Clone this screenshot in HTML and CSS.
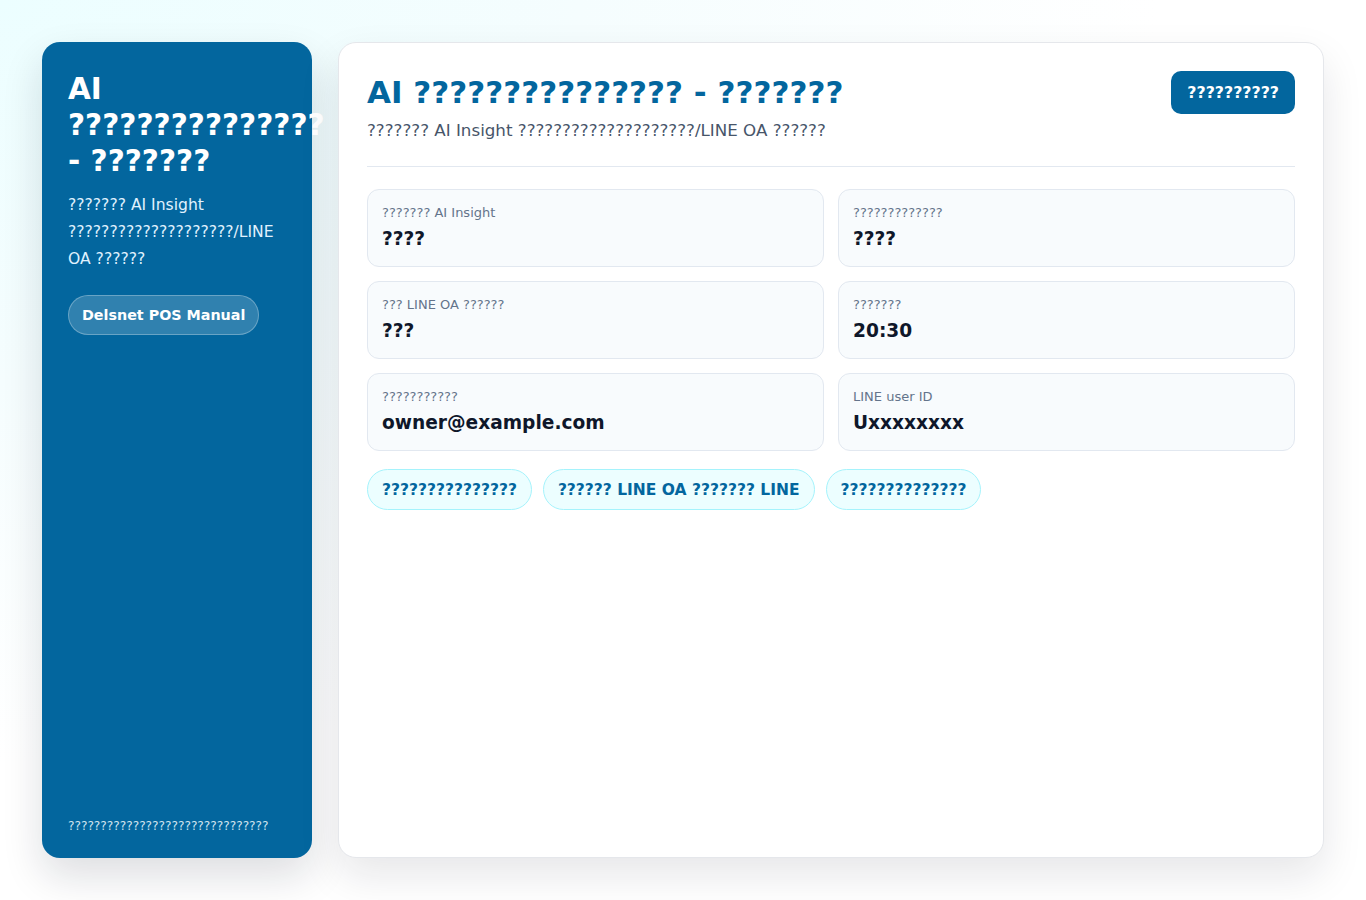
FILE: index.html
```html
<!DOCTYPE html>
<html lang="th">
<head>
<meta charset="utf-8">
<title>AI Insight</title>
<link rel="stylesheet" href="styles.css">
</head>
<body>
<div class="layout">
  <aside class="sidebar">
    <h1 class="side-title">AI ??????????????? - ???????</h1>
    <p class="side-text">??????? AI Insight ????????????????????/LINE OA ??????</p>
    <a class="side-btn" href="#">Delsnet POS Manual</a>
    <div class="side-foot">???????????????????????????????</div>
  </aside>
  <main class="main">
    <header class="head">
      <div class="head-text">
        <h2 class="title">AI ??????????????? - ???????</h2>
        <p class="subtitle">??????? AI Insight ????????????????????/LINE OA ??????</p>
      </div>
      <button class="primary">??????????</button>
    </header>
    <section class="grid">
      <div class="card"><div class="label">??????? AI Insight</div><div class="value">????</div></div>
      <div class="card"><div class="label">?????????????</div><div class="value">????</div></div>
      <div class="card"><div class="label">??? LINE OA ??????</div><div class="value">???</div></div>
      <div class="card"><div class="label">???????</div><div class="value">20:30</div></div>
      <div class="card"><div class="label">???????????</div><div class="value">owner@example.com</div></div>
      <div class="card"><div class="label">LINE user ID</div><div class="value">Uxxxxxxxx</div></div>
    </section>
    <div class="pills">
      <button class="pill">???????????????</button>
      <button class="pill">?????? LINE OA ??????? LINE</button>
      <button class="pill">??????????????</button>
    </div>
  </main>
</div>
</body>
</html>
```
FILE: styles.css
```css
* { box-sizing: border-box; }
html, body { margin: 0; height: 100%; }
body {
  font-family: "DejaVu Sans", Verdana, sans-serif;
  background: radial-gradient(ellipse at 0% 0%, #ecfeff 0%, #f5fdfe 30%, #ffffff 60%);
  color: #0f172a;
}
.layout {
  display: grid;
  grid-template-columns: 270px 1fr;
  gap: 26px;
  padding: 42px 42px 42px 42px;
  height: 900px;
}
.sidebar {
  background: #03669e;
  border-radius: 18px;
  padding: 29px 26px 24px;
  color: #fff;
  display: flex;
  flex-direction: column;
  align-items: flex-start;
  box-shadow: 0 18px 40px rgba(15, 23, 42, 0.14);
}
.side-title {
  margin: 0;
  font-size: 29.5px;
  line-height: 36px;
  font-weight: 700;
}
.side-text {
  margin: 13px 0 0;
  font-size: 15.6px;
  line-height: 27px;
  color: #e0f2fe;
  word-break: break-word;
}
.side-btn {
  margin-top: 22px;
  display: inline-block;
  padding: 9.5px 13px;
  border-radius: 999px;
  background: rgba(255, 255, 255, 0.18);
  border: 1px solid rgba(255, 255, 255, 0.28);
  color: #fff;
  font-weight: 700;
  font-size: 14.3px;
  line-height: 19px;
  text-decoration: none;
}
.side-foot {
  margin-top: auto;
  font-size: 12.2px;
  line-height: 16px;
  color: #cfe3ef;
}
.main {
  background: #fff;
  border: 1px solid #e5e7eb;
  border-radius: 18px;
  padding: 28px 28px;
  box-shadow: 0 18px 40px rgba(15, 23, 42, 0.10);
}
.head {
  display: flex;
  justify-content: space-between;
  align-items: flex-start;
  padding-bottom: 25px;
  border-bottom: 1px solid #e2e8f0;
}
.title {
  margin: 0;
  font-size: 31px;
  line-height: 42px;
  color: #03669e;
  font-weight: 700;
}
.subtitle {
  margin: 6px 0 0;
  font-size: 16.7px;
  line-height: 22px;
  color: #475569;
}
.primary {
  font-family: inherit;
  background: #03669e;
  color: #fff;
  border: 0;
  border-radius: 10px;
  height: 43px;
  padding: 0 16px;
  font-weight: 700;
  font-size: 15.8px;
}
.grid {
  margin-top: 22px;
  display: grid;
  grid-template-columns: 1fr 1fr;
  gap: 14px 14px;
}
.card {
  background: #f8fbfd;
  border: 1px solid #e2e8f0;
  border-radius: 12px;
  height: 78px;
  padding: 14px 14px;
}
.label {
  font-size: 13px;
  line-height: 18px;
  color: #64748b;
}
.value {
  margin-top: 4px;
  font-size: 18.6px;
  line-height: 26px;
  font-weight: 700;
  color: #0f172a;
}
.pills {
  margin-top: 18px;
  display: flex;
  gap: 11px;
}
.pill {
  font-family: inherit;
  height: 41px;
  padding: 0 14px;
  border-radius: 999px;
  background: #ecfeff;
  border: 1px solid #a5f3fc;
  color: #03669e;
  font-weight: 700;
  font-size: 15.5px;
}
```
